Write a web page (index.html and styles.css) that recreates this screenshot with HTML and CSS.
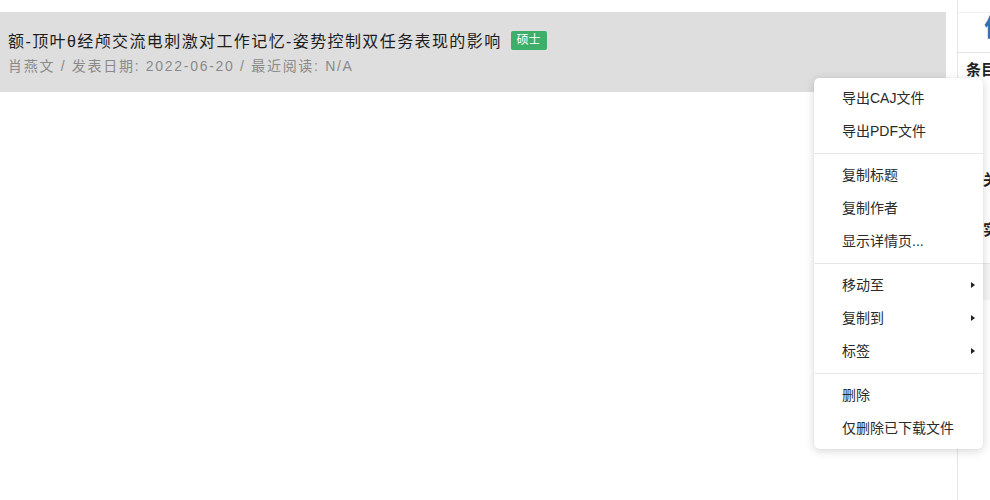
FILE: index.html
```html
<!DOCTYPE html>
<html lang="zh-CN">
<head>
<meta charset="utf-8">
<title>文献列表</title>
<link rel="stylesheet" href="styles.css">
</head>
<body>
<div class="app">
  <main class="list">
    <div class="row">
      <div class="title">
        <span class="title-text">额-顶叶θ经颅交流电刺激对工作记忆-姿势控制双任务表现的影响</span>
        <span class="badge">硕士</span>
      </div>
      <div class="meta">肖燕文 / 发表日期: 2022-06-20 / 最近阅读: N/A</div>
    </div>
  </main>
  <aside class="side">
    <div class="side-tab"><span class="tab-glyph">信</span></div>
    <div class="side-head">条目</div>
    <div class="side-body">
      <div class="side-item">关</div>
      <div class="side-item">实</div>
    </div>
    <div class="side-band"></div>
  </aside>
</div>

<ul class="menu">
  <li class="item">导出CAJ文件</li>
  <li class="item">导出PDF文件</li>
  <li class="sep"></li>
  <li class="item">复制标题</li>
  <li class="item">复制作者</li>
  <li class="item">显示详情页...</li>
  <li class="sep"></li>
  <li class="item sub">移动至</li>
  <li class="item sub">复制到</li>
  <li class="item sub">标签</li>
  <li class="sep"></li>
  <li class="item">删除</li>
  <li class="item">仅删除已下载文件</li>
</ul>
</body>
</html>
```

FILE: styles.css
```css
* { box-sizing: border-box; }

html, body {
  margin: 0;
  padding: 0;
  background: #ffffff;
  font-family: "Liberation Sans", "Noto Sans CJK SC", sans-serif;
  color: #222;
}

body {
  width: 990px;
  height: 500px;
  overflow: hidden;
  position: relative;
}

.app {
  display: flex;
  padding-top: 12px;
  height: 500px;
}

.list {
  width: 946px;
  flex: none;
}

.row {
  height: 80px;
  background: #dedede;
  padding: 16px 8px 0;
}

.title {
  display: flex;
  align-items: center;
  height: 24px;
}

.title-text {
  font-size: 16px;
  letter-spacing: 1.4px;
  color: #1c1c1c;
  white-space: nowrap;
}

.badge {
  margin-left: 9px;
  height: 19px;
  width: 36px;
  background: #3daf6b;
  color: #fff;
  font-size: 12px;
  line-height: 19px;
  text-align: center;
  border-radius: 2px;
}

.meta {
  margin-top: 4px;
  font-size: 14px;
  line-height: 20px;
  color: #8a8a8a;
  letter-spacing: 1.7px;
  white-space: nowrap;
}

.side {
  margin-left: 11px;
  flex: 1;
  border-left: 1px solid #e6e6e6;
  margin-top: -12px;
  padding-top: 12px;
  overflow: hidden;
  display: flex;
  flex-direction: column;
}

.side-tab {
  height: 41px;
  border-bottom: 1px solid #e6e6e6;
  border-top: 1px solid #eeeeee;
  padding-left: 26px;
  overflow: hidden;
}

.tab-glyph {
  display: block;
  font-size: 24px;
  font-weight: 700;
  line-height: 30px;
  color: #2b73b9;
}

.side-head {
  padding-left: 8px;
  font-size: 15px;
  font-weight: 700;
  line-height: 34px;
  white-space: nowrap;
}

.side-body {
  padding-left: 25px;
  padding-top: 82px;
  height: 177px;
  border-bottom: 1px solid #e6e6e6;
}

.side-item {
  font-size: 15px;
  font-weight: 700;
  line-height: 22px;
  margin-bottom: 28px;
}

.side-band {
  height: 36px;
  background: #f5f5f5;
}

.menu {
  position: absolute;
  left: 814px;
  top: 78px;
  width: 169px;
  margin: 0;
  padding: 4px 0;
  list-style: none;
  background: #fff;
  border-radius: 5px;
  box-shadow: 0 2px 10px rgba(0, 0, 0, 0.16), 0 0 1px rgba(0, 0, 0, 0.12);
}

.item {
  height: 33px;
  line-height: 33px;
  padding-left: 28px;
  font-size: 14px;
  color: #2a2a2a;
  position: relative;
  white-space: nowrap;
}

.sub::after {
  content: "";
  position: absolute;
  right: 8px;
  top: 13px;
  border-left: 4px solid #222;
  border-top: 3.5px solid transparent;
  border-bottom: 3.5px solid transparent;
}

.sep {
  height: 1px;
  margin: 5px 0;
  background: #e8e8e8;
}
```
